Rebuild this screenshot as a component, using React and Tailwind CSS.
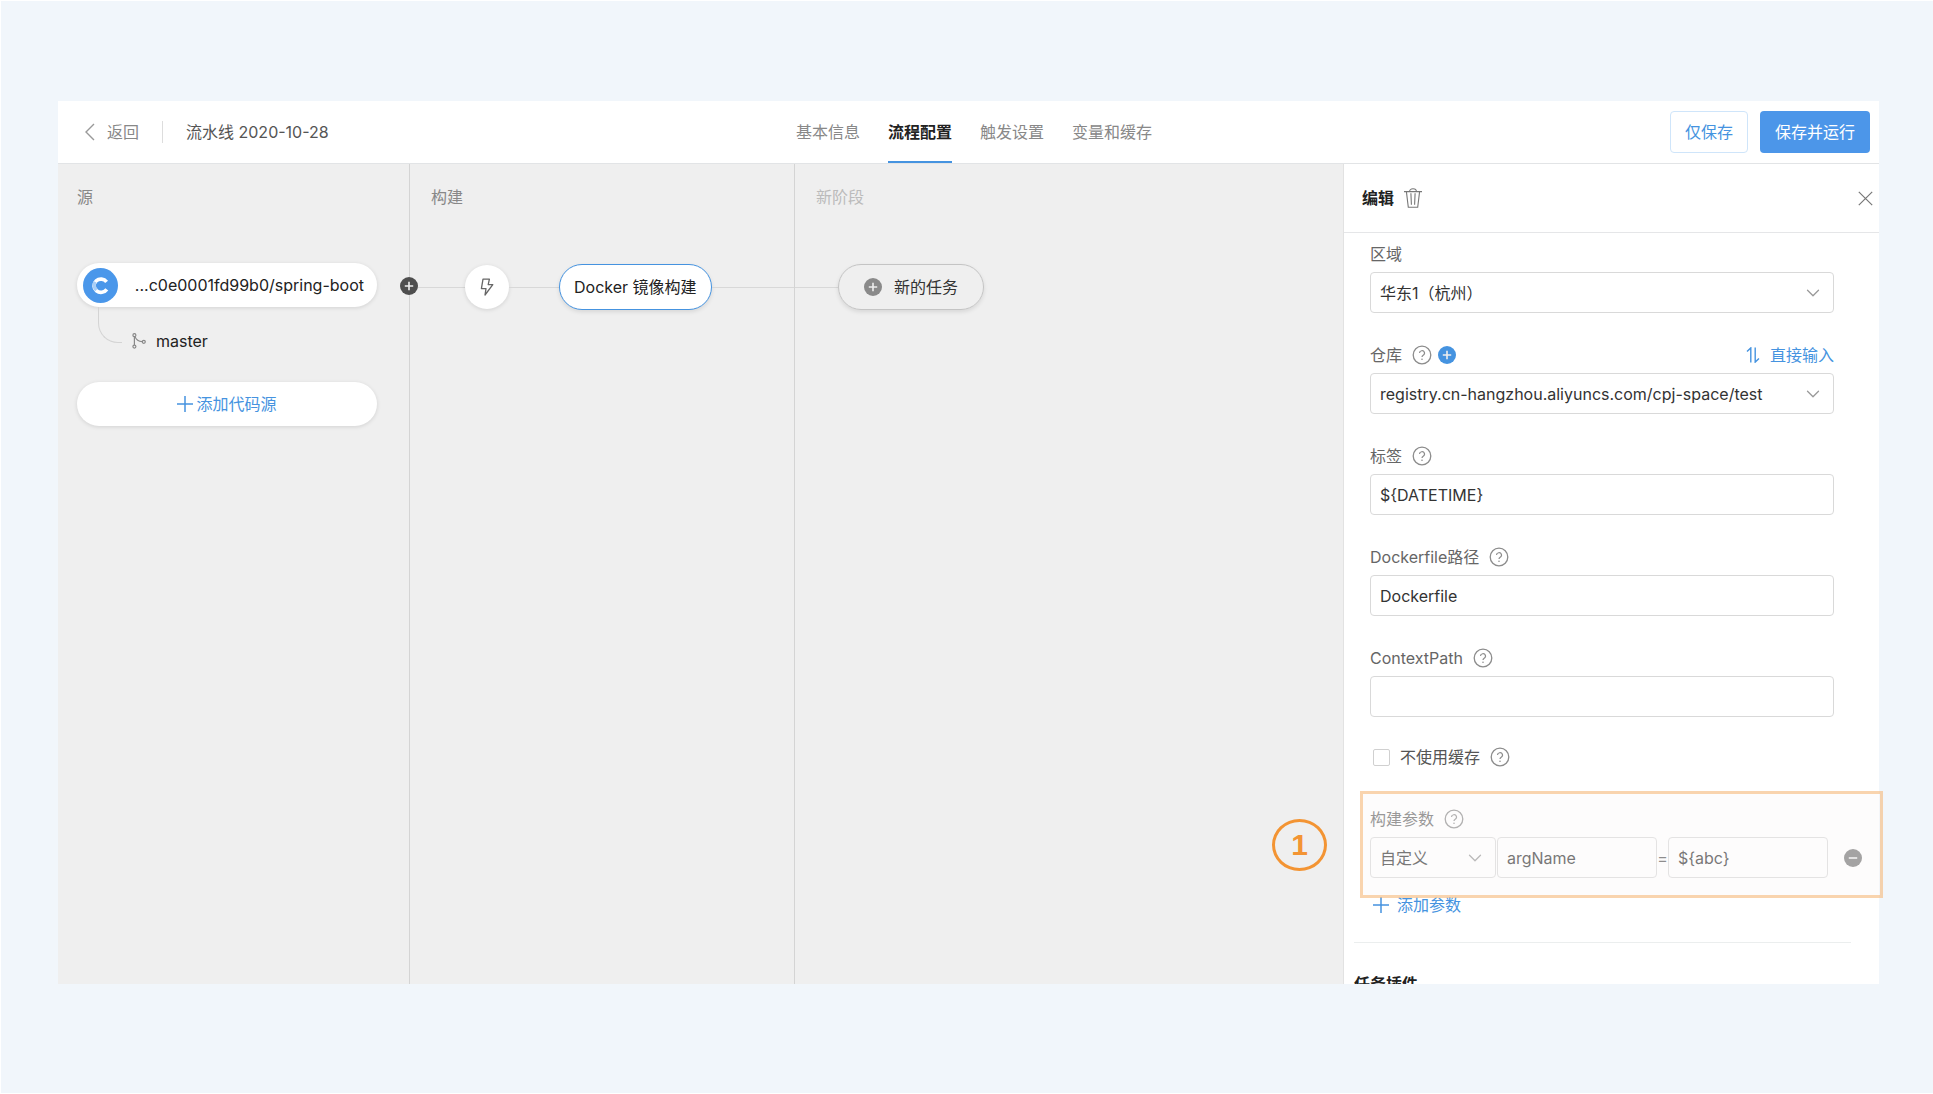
import { ChevronDown } from 'lucide-react';

const TABS = ['基本信息', '流程配置', '触发设置', '变量和缓存'];
const ACTIVE_TAB = '流程配置';

const INPUT =
  'h-[41px] w-full rounded border border-[#d9d9d9] bg-white px-[9px] text-base text-[#333] outline-none';

function BackIcon() {
  return (
    <svg className="h-[18px] w-[10px]" viewBox="0 0 10 18" fill="none" stroke="#999" strokeWidth="1.4">
      <path d="M9 1 1 9l8 8" />
    </svg>
  );
}

function PlusIcon() {
  return (
    <svg className="size-4 shrink-0" viewBox="0 0 16 16" stroke="currentColor" strokeWidth="1.5">
      <path d="M0 8h16M8 0v16" />
    </svg>
  );
}

function CloseIcon() {
  return (
    <svg className="size-[15px]" viewBox="0 0 15 15" stroke="#777" strokeWidth="1.2">
      <path d="m.8.8 13.4 13.4M14.2.8.8 14.2" />
    </svg>
  );
}

function HelpIcon() {
  return (
    <svg className="size-5 shrink-0" viewBox="0 0 20 20" fill="none" stroke="#8c8c8c">
      <circle cx="10" cy="10" r="8.8" strokeWidth="1.3" />
      <path d="M7.5 8.1a2.5 2.4 0 1 1 3.7 2.1c-.8.5-1.2.9-1.2 1.9" strokeWidth="1.2" />
      <circle cx="10" cy="14.2" r=".8" fill="#8c8c8c" stroke="none" />
    </svg>
  );
}

function RoundIcon({ className, minus }) {
  return (
    <svg className={`size-[18px] shrink-0 ${className}`} viewBox="0 0 18 18">
      <circle cx="9" cy="9" r="9" fill="currentColor" />
      <path d={minus ? 'M4.8 9h8.4' : 'M4.8 9h8.4M9 4.8v8.4'} stroke="#eee" strokeWidth="1.6" />
    </svg>
  );
}

function TrashIcon() {
  return (
    <svg className="h-5 w-[18px]" viewBox="0 0 18 20" fill="none" stroke="#777" strokeWidth="1.1">
      <path d="M0 3.6h18M5.6 3.6C5.6 1.9 6.8.8 9 .8s3.4 1.1 3.4 2.8M2.4 3.6l1.9 15.6h9.4l1.9-15.6M6.9 5.2l.5 11.6M11.1 5.2l-.5 11.6" />
    </svg>
  );
}

function BranchIcon() {
  return (
    <svg className="h-4 w-[14px]" viewBox="0 0 14 16" fill="none" stroke="#888" strokeWidth="1.2">
      <circle cx="2.4" cy="2.2" r="1.5" />
      <circle cx="2.4" cy="13.6" r="1.5" />
      <circle cx="11.8" cy="8.8" r="1.5" />
      <path d="M2.4 3.7v8.4M3 3.6c1.2 3.2 3.4 4.8 7.3 5.1" />
    </svg>
  );
}

function LightningIcon() {
  return (
    <svg className="h-[18px] w-[14px]" viewBox="0 0 14 18" fill="none" stroke="#666" strokeWidth="1.3" strokeLinejoin="round">
      <path d="M3 1.2h6.4L8.2 6.6h4.6L5 17l1-6.4H1.4z" />
    </svg>
  );
}

function SwapIcon() {
  return (
    <svg className="h-4 w-[14px]" viewBox="0 0 14 16" fill="none" stroke="currentColor" strokeWidth="1.4">
      <path d="M1 4.6 4.8.9v14.6M9.2.5v14.6L13 11.4" />
    </svg>
  );
}

function CodeupLogo() {
  return (
    <svg className="size-[35px] shrink-0" viewBox="0 0 35 35" fill="none">
      <circle cx="17.5" cy="17.5" r="17.5" fill="#4a97ea" />
      <path d="M23.6 13.8a7 6.6 0 1 0 .2 7.6" stroke="#fff" strokeWidth="3.6" />
      <path d="M12 13.8a7 7 0 0 0 1.4 8.2" stroke="#a9cff7" strokeWidth="3.4" />
    </svg>
  );
}

function StageTitle({ children, className = 'text-[#888]' }) {
  return <h2 className={`flex h-[68px] items-center pb-0.5 text-base ${className}`}>{children}</h2>;
}

function Connector({ className }) {
  return <div className={`h-px bg-[#d8d8d8] ${className}`} />;
}

function Select({ id, label, options, className = 'w-full' }) {
  return (
    <div className={`relative ${className}`}>
      <select id={id} aria-label={label} className={`${INPUT} appearance-none`}>
        {options.map((option) => (
          <option key={option}>{option}</option>
        ))}
      </select>
      <ChevronDown
        className="pointer-events-none absolute top-2.5 right-2.5 size-[22px] text-[#999]"
        strokeWidth={1.4}
      />
    </div>
  );
}

function Field({ id, label, help, extra, children }) {
  return (
    <div className="mb-[30px]">
      <div className="mb-1.5 flex h-6 items-center">
        <label htmlFor={id} className="mr-2.5 text-base text-[#666]">{label}</label>
        {help && <HelpIcon />}
        {extra}
      </div>
      {children}
    </div>
  );
}

function Header() {
  return (
    <header className="flex h-[63px] shrink-0 items-stretch border-b border-[#e2e4e6] bg-white">
      <div className="flex flex-1 items-center">
        <a href="#back" className="ml-[27px] flex items-center gap-3 text-base text-[#888]">
          <BackIcon />
          返回
        </a>
        <div className="mx-[23px] h-[22px] w-px bg-[#ddd]" />
        <h1 className="text-base text-[#555]">流水线 2020-10-28</h1>
      </div>

      <nav className="ml-5 flex gap-7">
        {TABS.map((tab) => (
          <a
            key={tab}
            href="#tab"
            className={`flex items-center border-b-2 pt-0.5 text-base ${
              tab === ACTIVE_TAB
                ? 'border-[#4593e0] font-bold text-[#222]'
                : 'border-transparent text-[#888]'
            }`}
          >
            {tab}
          </a>
        ))}
      </nav>

      <div className="flex flex-1 items-center justify-end gap-3 pr-[9px]">
        <button type="button" className="h-[42px] rounded border border-[#cfe5fa] px-[14px] text-base text-[#4593e0]">
          仅保存
        </button>
        <button type="button" className="h-[42px] rounded bg-[#4c96e9] px-[15px] text-base text-white">
          保存并运行
        </button>
      </div>
    </header>
  );
}

function SourceStage() {
  return (
    <section className="w-[352px] shrink-0 border-r border-[#d4d4d4] pr-8 pl-[19px]">
      <StageTitle>源</StageTitle>
      <div className="mt-[31px] flex h-11 items-center justify-between rounded-full bg-white pr-[13px] pl-1.5 shadow-[0_1px_4px_rgba(0,0,0,0.12)]">
        <CodeupLogo />
        <span className="text-base text-[#222]">...c0e0001fd99b0/spring-boot</span>
      </div>
      <div className="ml-[21px] flex h-[68px] items-start">
        <div className="h-9 w-6 rounded-bl-[20px] border-b border-l border-[#d4d4d4]" />
        <div className="mt-[22px] ml-2.5 flex items-center gap-2.5 text-base text-[#222]">
          <BranchIcon />
          master
        </div>
      </div>
      <button
        type="button"
        className="mt-[7px] flex h-11 w-full items-center justify-center gap-[3px] rounded-full bg-white text-base text-[#4593e0] shadow-[0_1px_4px_rgba(0,0,0,0.12)]"
      >
        <PlusIcon />
        添加代码源
      </button>
    </section>
  );
}

function BuildStage() {
  return (
    <section className="w-[385px] shrink-0 border-r border-[#d4d4d4]">
      <StageTitle className="pl-[21px] text-[#888]">构建</StageTitle>
      <div className="relative mt-8 flex h-[46px] items-center">
        <button type="button" aria-label="添加阶段" className="absolute top-[13px] -left-2.5">
          <RoundIcon className="text-[#4e4e4e]" />
        </button>
        <Connector className="w-[55px]" />
        <div className="flex size-11 items-center justify-center rounded-full bg-white shadow-[0_1px_4px_rgba(0,0,0,0.12)]">
          <LightningIcon />
        </div>
        <Connector className="w-[50px]" />
        <button
          type="button"
          className="h-[46px] rounded-full border border-[#4593e0] bg-white px-3.5 text-base text-[#222] shadow-[0_2px_4px_rgba(0,0,0,0.1)]"
        >
          Docker 镜像构建
        </button>
        <Connector className="flex-1" />
      </div>
    </section>
  );
}

function NewStage() {
  return (
    <section className="flex-1">
      <StageTitle className="pl-[21px] text-[#bbb]">新阶段</StageTitle>
      <div className="mt-8 flex h-[46px] items-center">
        <Connector className="w-[43px]" />
        <button
          type="button"
          className="flex h-[46px] items-center gap-3 rounded-full border border-[#c4c4c4] px-[25px] text-base text-[#333] shadow-[0_2px_4px_rgba(0,0,0,0.1)]"
        >
          <RoundIcon className="text-[#8a8a8a]" />
          新的任务
        </button>
      </div>
    </section>
  );
}

function BuildArgs() {
  return (
    <div className="relative">
      <div className="mb-1.5 flex h-6 items-center gap-2.5">
        <span className="text-base text-[#666]">构建参数</span>
        <HelpIcon />
      </div>
      <div className="flex items-center">
        <Select label="参数类型" options={['自定义']} className="mr-px w-[126px]" />
        <div className="w-40">
          <input aria-label="参数名" defaultValue="argName" className={INPUT} />
        </div>
        <span className="w-[11px] text-center text-base text-[#555]">=</span>
        <div className="w-40">
          <input aria-label="参数值" defaultValue="${abc}" className={INPUT} />
        </div>
        <button type="button" aria-label="删除参数" className="ml-4">
          <RoundIcon minus className="text-[#777]" />
        </button>
      </div>

      {/* Highlight frame and step number over the build args */}
      <div className="pointer-events-none absolute -top-4 -bottom-5 -left-[10px] w-[523px] border-[3px] border-[#f5a54f]/45 bg-[#f8f6f6]/35" />
      <div className="pointer-events-none absolute top-3 -left-[98px] flex h-[52px] w-[55px] items-center justify-center rounded-[50%] border-[3px] border-[#f39433] font-['Liberation_Sans',sans-serif] text-3xl font-bold text-[#f39433]">
        1
      </div>
    </div>
  );
}

function EditPanel() {
  return (
    <aside className="flex w-[536px] shrink-0 flex-col border-l border-[#e2e2e2] bg-white">
      <div className="flex h-[69px] shrink-0 items-center border-b border-[#e5e6e8] pr-1.5 pl-[18px]">
        <h2 className="mr-2.5 text-base font-bold text-[#222]">编辑</h2>
        <button type="button" aria-label="删除">
          <TrashIcon />
        </button>
        <button type="button" aria-label="关闭" className="ml-auto">
          <CloseIcon />
        </button>
      </div>

      <form className="min-h-0 flex-1 overflow-y-clip pt-[9px] pl-[26px]">
        <div className="mr-[45px]">
          <Field id="region" label="区域">
            <Select id="region" options={['华东1（杭州）']} />
          </Field>
          <Field
            id="repo"
            label="仓库"
            help
            extra={
              <>
                <button type="button" aria-label="新建仓库" className="ml-1.5">
                  <RoundIcon className="text-[#4593e0]" />
                </button>
                <button type="button" className="ml-auto flex items-center gap-2.5 text-base text-[#4593e0]">
                  <SwapIcon />
                  直接输入
                </button>
              </>
            }
          >
            <Select id="repo" options={['registry.cn-hangzhou.aliyuncs.com/cpj-space/test']} />
          </Field>
          <Field id="tag" label="标签" help>
            <input id="tag" defaultValue="${DATETIME}" className={INPUT} />
          </Field>
          <Field id="dockerfile" label="Dockerfile路径" help>
            <input id="dockerfile" defaultValue="Dockerfile" className={INPUT} />
          </Field>
          <Field id="context" label="ContextPath" help>
            <input id="context" className={INPUT} />
          </Field>
        </div>

        <div className="-mt-0.5 mb-[38px] flex h-6 items-center gap-2.5">
          <label className="flex items-center gap-2.5 text-base text-[#555]">
            <input
              type="checkbox"
              className="ml-[3px] size-[17px] appearance-none rounded-xs border border-[#d0d0d0] bg-white"
            />
            不使用缓存
          </label>
          <HelpIcon />
        </div>

        <BuildArgs />

        <button type="button" className="mt-[15px] ml-[3px] flex h-6 items-center gap-2 text-base text-[#4593e0]">
          <PlusIcon />
          添加参数
        </button>
        <div className="mt-[25px] mr-7 -ml-4 border-t border-[#ebeeee] pt-[29px]">
          <h3 className="text-base font-bold text-[#222]">任务插件</h3>
        </div>
      </form>
    </aside>
  );
}

export default function App() {
  return (
    <div className="flex h-screen flex-col border-y border-l border-white bg-[#f1f6fb] pt-[100px] pr-[54px] pb-[109px] pl-[57px] font-['Inter','Noto_Sans_CJK_SC',sans-serif]">
      <Header />
      <main className="flex min-h-0 flex-1 bg-[#efefef]">
        <SourceStage />
        <BuildStage />
        <NewStage />
        <EditPanel />
      </main>
    </div>
  );
}
